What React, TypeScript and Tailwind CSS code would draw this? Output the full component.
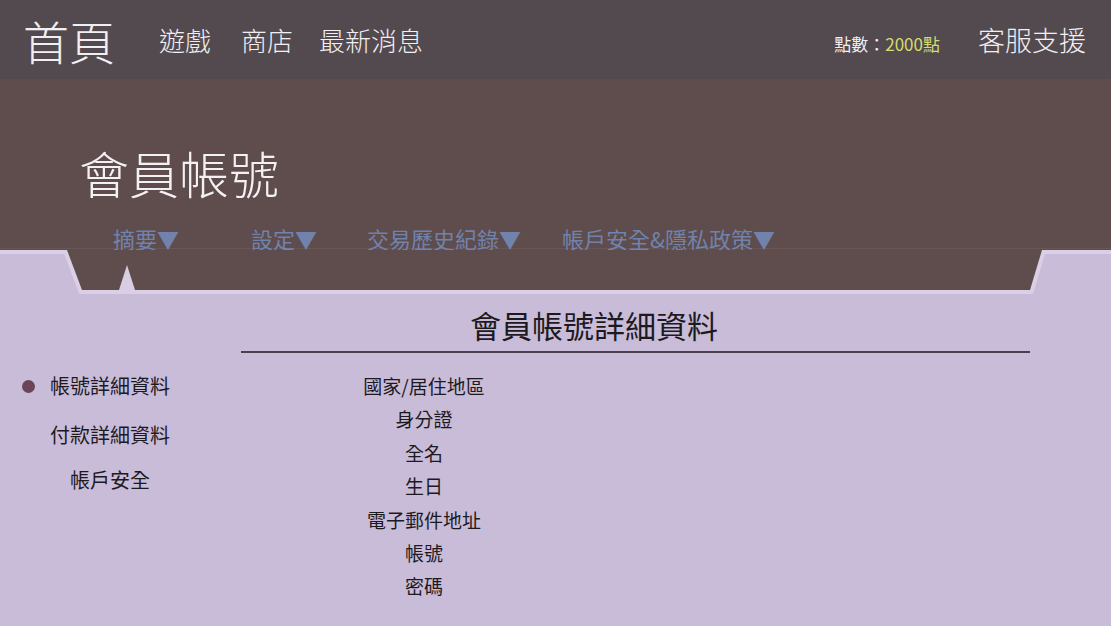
export default function App() {
  const tabs = [
    { label: '摘要', cls: 'ml-[113px]' },
    { label: '設定', cls: 'ml-[72px]' },
    { label: '交易歷史紀錄', cls: 'ml-[50px]' },
    { label: '帳戶安全&隱私政策', cls: 'ml-[41px]' },
  ];

  const sideItems = [
    { label: '帳號詳細資料', active: true, cls: '' },
    { label: '付款詳細資料', active: false, cls: 'mt-[29px]' },
    { label: '帳戶安全', active: false, cls: 'mt-[25px]' },
  ];

  const fields = ['國家/居住地區', '身分證', '全名', '生日', '電子郵件地址', '帳號', '密碼'];

  return (
    <div className="min-h-[626px] w-[1111px] bg-[#c9bcd9] font-['Noto_Sans_CJK_TC','Noto_Sans',sans-serif]">
      {/* Top navigation */}
      <header className="flex h-[79px] items-center bg-[#524a4f] pr-[25px] text-[#f2eff2]">
        <a className="ml-[23px] text-[46px] font-light leading-none">首頁</a>
        <nav className="flex items-center text-[26px] font-light leading-none">
          <a className="ml-[44px]">遊戲</a>
          <a className="ml-[30px]">商店</a>
          <a className="ml-[26px]">最新消息</a>
        </nav>
        <div className="ml-auto mt-[8px] flex items-center text-[17px] leading-none">
          <span>點數：</span>
          <span className="text-[#d5dc6c]">2000點</span>
        </div>
        <a className="ml-[38px] text-[27px] font-light leading-none">客服支援</a>
      </header>

      {/* Hero */}
      <section className="h-[171px] bg-[#5e4d4c]">
        <h1 className="ml-[79px] pt-[68px] text-[50px] font-light leading-none text-[#f4f1f4]">會員帳號</h1>
        <div className="mt-[32px] flex h-[20px] items-center border-b border-[#685756] text-[22px] leading-[19px] text-[#7182ad]">
          {tabs.map(t => (
            <span key={t.label} className={t.cls}>
              {t.label}▼
            </span>
          ))}
        </div>
      </section>

      {/* Tab shelf */}
      <svg width="1111" height="44" viewBox="0 0 1111 44" className="block">
        <path d="M0 0 L67 0 L82 40 L1030 40 L1042 0 L1111 0" fill="none" stroke="#dbcfe5" strokeWidth="8" />
        <polygon points="67,0 1042,0 1030,40 82,40" fill="#5e4d4c" />
        <polygon points="119,40 127,15 135,40" fill="#d9cde4" />
      </svg>

      {/* Content */}
      <main className="flex">
        <aside className="w-[241px] pt-[82px] text-[20px] leading-[20px] text-[#1d1a1f]">
          {sideItems.map(s => (
            <div key={s.label} className={`flex items-center ${s.cls}`}>
              <div className="w-[50px]">
                {s.active && <span className="ml-[22px] block h-[13px] w-[13px] rounded-full bg-[#6b4458]" />}
              </div>
              <span className="w-[120px] text-center">{s.label}</span>
            </div>
          ))}
        </aside>

        <div className="w-[789px]">
          <h2 className="pl-[229px] pt-[16px] text-[31px] leading-[30px] text-[#1d1a1f]">會員帳號詳細資料</h2>
          <div className="mt-[11px] h-[2px] bg-[#4a4050]" />
          <ul className="mt-[16px] w-[366px] text-center text-[19px] leading-[33.4px] text-[#1d1a1f]">
            {fields.map(f => (
              <li key={f}>{f}</li>
            ))}
          </ul>
        </div>
      </main>
    </div>
  );
}
